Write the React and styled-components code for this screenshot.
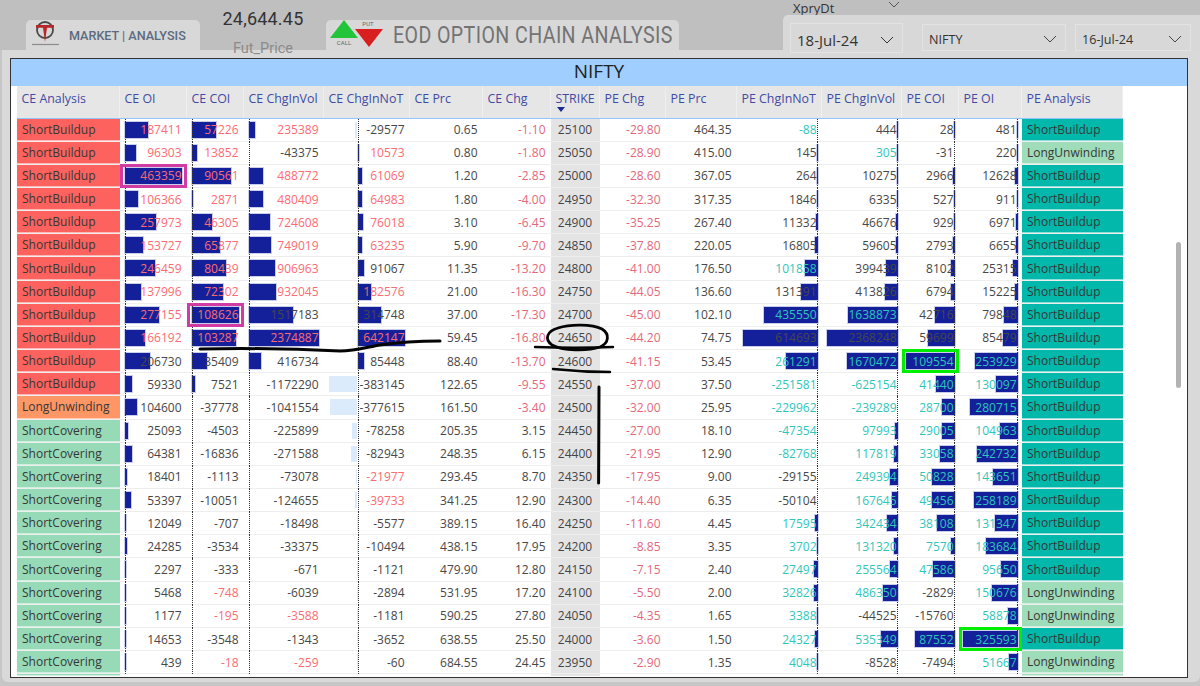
import React from 'react';
import styled, {createGlobalStyle} from 'styled-components';

// #region Data
const columns = [
  {key: 'ceOi', side: 'ce', offset: 5, span: 57},
  {key: 'ceCoi', side: 'ce', offset: 5, span: 47},
  {key: 'ceVol', side: 'ce', offset: 5, span: 70},
  {key: 'ceNot', side: 'ce', offset: 34, span: 47, negative: true},
  {key: 'cePrc'},
  {key: 'ceChg'},
  {key: 'strike'},
  {key: 'peChg'},
  {key: 'pePrc'},
  {key: 'peNot', side: 'pe', span: 75},
  {key: 'peVol', side: 'pe', span: 71},
  {key: 'peCoi', side: 'pe', span: 49},
  {key: 'peOi', side: 'pe', span: 55},
];

const headers = [
  'CE Analysis', 'CE OI', 'CE COI', 'CE ChgInVol', 'CE ChgInNoT', 'CE Prc', 'CE Chg', 'STRIKE',
  'PE Chg', 'PE Prc', 'PE ChgInNoT', 'PE ChgInVol', 'PE COI', 'PE OI', 'PE Analysis',
];

// value + colour letter: r red, k dark, t teal
const rows = [
  ['SB', '187411r', '57226r', '235389r', '-29577k', '0.65', '-1.10', '25100', '-29.80', '464.35', '-88t', '444k', '28k', '481k', 'SB'],
  ['SB', '96303r', '13852r', '-43375k', '10573r', '0.80', '-1.80', '25050', '-28.90', '415.00', '145k', '305t', '-31k', '220k', 'LU'],
  ['SB', '463359r', '90561r', '488772r', '61069r', '1.20', '-2.85', '25000', '-28.60', '367.05', '264k', '10275k', '2966k', '12628k', 'SB'],
  ['SB', '106366r', '2871r', '480409r', '64983r', '1.80', '-4.00', '24950', '-32.30', '317.35', '1846k', '6335k', '527k', '911k', 'SB'],
  ['SB', '257973r', '46305r', '724608r', '76018r', '3.10', '-6.45', '24900', '-35.25', '267.40', '11332k', '46676k', '929k', '6971k', 'SB'],
  ['SB', '153727r', '65877r', '749019r', '63235r', '5.90', '-9.70', '24850', '-37.80', '220.05', '16805k', '59605k', '2793k', '6655k', 'SB'],
  ['SB', '246459r', '80439r', '906963r', '91067k', '11.35', '-13.20', '24800', '-41.00', '176.50', '101858t', '399439k', '8102k', '25315k', 'SB'],
  ['SB', '137996r', '72302r', '932045r', '182576r', '21.00', '-16.30', '24750', '-44.05', '136.60', '131391k', '413826k', '6794k', '15225k', 'SB'],
  ['SB', '277155r', '108626r', '1517183k', '314748k', '37.00', '-17.30', '24700', '-45.00', '102.10', '435550t', '1638873t', '42716k', '79848k', 'SB'],
  ['SB', '166192r', '103287r', '2374887r', '642147r', '59.45', '-16.80', '24650', '-44.20', '74.75', '614693k', '2368248k', '59699k', '85479k', 'SB'],
  ['SB', '206730k', '35409k', '416734k', '85448k', '88.40', '-13.70', '24600', '-41.15', '53.45', '261291t', '1670472t', '109554t', '253929t', 'SB'],
  ['SB', '59330k', '7521k', '-1172290k', '-383145k', '122.65', '-9.55', '24550', '-37.00', '37.50', '-251581t', '-625154t', '41440t', '130097t', 'SB'],
  ['LU', '104600k', '-37778k', '-1041554k', '-377615k', '161.50', '-3.40', '24500', '-32.00', '25.95', '-229962t', '-239289t', '28700t', '280715t', 'SB'],
  ['SC', '25093k', '-4503k', '-225899k', '-78258k', '205.35', '3.15', '24450', '-27.00', '18.10', '-47354t', '97993t', '29005t', '104963t', 'SB'],
  ['SC', '64381k', '-16836k', '-271588k', '-82943k', '248.35', '6.15', '24400', '-21.95', '12.90', '-82768t', '117819t', '33058t', '242732t', 'SB'],
  ['SC', '18401k', '-1113k', '-73078k', '-21977r', '293.45', '8.70', '24350', '-17.95', '9.00', '-29155k', '249394t', '50828t', '143651t', 'SB'],
  ['SC', '53397k', '-10051k', '-124655k', '-39733r', '341.25', '12.90', '24300', '-14.40', '6.35', '-50104k', '167645t', '49456t', '258189t', 'SB'],
  ['SC', '12049k', '-707k', '-18498k', '-5577k', '389.15', '16.40', '24250', '-11.60', '4.45', '17595t', '342434t', '38108t', '131347t', 'SB'],
  ['SC', '24285k', '-3534k', '-33375k', '-10494k', '438.15', '17.95', '24200', '-8.85', '3.35', '3702t', '131320t', '7570t', '183684t', 'SB'],
  ['SC', '2297k', '-333k', '-671k', '-1121k', '479.90', '12.80', '24150', '-7.15', '2.40', '27497t', '255564t', '47586t', '95650t', 'SB'],
  ['SC', '5468k', '-748r', '-6039k', '-2894k', '531.95', '17.20', '24100', '-5.50', '2.00', '32826t', '486350t', '-2829k', '150676t', 'LU'],
  ['SC', '1177k', '-195r', '-3588r', '-1181k', '590.25', '27.80', '24050', '-4.35', '1.65', '3388t', '-44525k', '-15760k', '58878t', 'LU'],
  ['SC', '14653k', '-3548k', '-1343k', '-3652k', '638.55', '25.50', '24000', '-3.60', '1.50', '24327t', '535349t', '87552t', '325593t', 'SB'],
  ['SC', '439k', '-18r', '-259r', '-60k', '684.55', '24.45', '23950', '-2.90', '1.35', '4048t', '-8528k', '-7494k', '51667t', 'LU'],
];

const marks = {
  '2-ceOi': 'pink',
  '8-ceCoi': 'pink',
  '10-peCoi': 'green',
  '22-peOi': 'green',
};

const labels = {SB: 'ShortBuildup', LU: 'LongUnwinding', SC: 'ShortCovering'};
const ceFill = {SB: '#fd625e', LU: '#fe9666', SC: '#96dab8'};
const peFill = {SB: '#01b8aa', LU: '#9edcba'};
const inks = {r: '#fd6b72', k: '#474747', t: '#2fc6ba'};
const gridCols = '103px 67px 57px 80px 86px 73px 68px 49px 66px 71px 85px 80px 57px 63px 101px';

const parse = raw => {
  const last = raw[raw.length - 1];
  if (inks[last]) return {text: raw.slice(0, -1), ink: inks[last]};
  return {text: raw, ink: null};
};

const maxOf = index => Math.max(...rows.map(r => Math.abs(parseFloat(r[index + 1]))));
// #endregion

// #region Styled Components
const Global = createGlobalStyle`
  html, body {
    margin: 0;
    padding: 0;
    background: #c4c4c4;
  }
`;
const Page = styled.div`
  position: relative;
  width: 1200px;
  height: 686px;
  overflow: hidden;
  display: flex;
  flex-direction: column;
  background: #c6c6c6;
  font-family: 'Open Sans', 'Liberation Sans', sans-serif;
  font-size: 12px;
  color: #444;
`;
const TopBar = styled.div`
  height: 50px;
  flex: none;
  display: flex;
  align-items: flex-end;
  padding-left: 26px;
  background: #bfbfbf;
`;
const Tab = styled.div`
  height: 30px;
  width: ${p => p.$width}px;
  flex: none;
  display: flex;
  align-items: center;
  background: #d8d8d8;
  border-radius: 5px 5px 0 0;
`;
const Logo = styled.svg`
  width: 42px;
  height: 30px;
  flex: none;
`;
const BrandName = styled.span`
  font-family: Roboto, sans-serif;
  font-weight: 500;
  font-size: 12.6px;
  color: #5b6b80;
  margin-left: 1px;
`;
const PriceBlock = styled.div`
  width: 126px;
  height: 50px;
  flex: none;
  display: flex;
  flex-direction: column;
  align-items: center;
  padding: 8px 0 0;
  box-sizing: border-box;
  position: relative;
  z-index: 2;
  font-family: Roboto, sans-serif;
`;
const Price = styled.div`
  font-size: 18px;
  line-height: 22px;
  color: #333;
  letter-spacing: 0.2px;
`;
const PriceLabel = styled.div`
  margin-top: 9px;
  font-size: 14.5px;
  line-height: 20px;
  color: #8b8b8b;
`;
const ChainIcon = styled.svg`
  width: 62px;
  height: 30px;
  flex: none;
  overflow: visible;
`;
const ChainTitle = styled.span`
  margin-left: 5px;
  font-family: Roboto, sans-serif;
  font-size: 23.5px;
  color: #737373;
  letter-spacing: 0.5px;
  white-space: nowrap;
  transform: scaleX(0.833);
  transform-origin: left center;
`;
const FilterColumn = styled.div`
  margin-left: 104px;
  width: 417px;
  height: 50px;
  flex: none;
  display: flex;
  flex-direction: column;
`;
const SlicerTitle = styled.div`
  height: 15px;
  display: flex;
  align-items: flex-start;
  padding-left: 10px;
  font-size: 13px;
  color: #333;
  line-height: 17px;
`;
const SlicerToggle = styled.svg`
  width: 12px;
  height: 8px;
  margin: 1px 0 0 54px;
`;
const FilterPanel = styled.div`
  height: 35px;
  padding: 8px 0 0 7px;
  box-sizing: border-box;
  display: flex;
  align-items: flex-start;
  background: #d8d8d8;
  border-radius: 5px 0 0 0;
  position: relative;
  z-index: 2;
`;
const Dropdown = styled.div`
  width: ${p => p.$width}px;
  height: ${p => (p.$large ? 30 : 27)}px;
  margin: ${p => (p.$large ? 0 : 1)}px 0 0 ${p => p.$gap || 0}px;
  box-sizing: border-box;
  padding: 3px 8px 0 6px;
  display: flex;
  align-items: center;
  justify-content: space-between;
  border: 1px solid #e3e3e3;
  font-size: ${p => (p.$large ? 15 : 12.6)}px;
  color: #333;
`;
const Chevron = styled.svg`
  width: 14px;
  height: 8px;
  flex: none;
`;
const Panel = styled.div`
  flex: 1;
  margin: 0 0 4px 2px;
  padding: 8px 12px 0 8px;
  background: #d9d9d9;
  border-radius: 0 0 6px 6px;
  min-height: 0;
  display: flex;
`;
const Frame = styled.div`
  position: relative;
  width: 1178px;
  height: 620px;
  box-sizing: border-box;
  border: 1.5px solid #333;
  background: #fff;
  overflow: hidden;
  display: flex;
  flex-direction: column;
`;
const TitleBar = styled.div`
  height: 27px;
  flex: none;
  padding-bottom: 4px;
  box-sizing: border-box;
  display: flex;
  align-items: center;
  justify-content: center;
  background: #a0cfff;
  font-size: 19px;
  color: #222;
`;
const Table = styled.div`
  margin-left: 5.5px;
  width: 1106px;
`;
const HeaderRow = styled.div`
  display: grid;
  grid-template-columns: ${gridCols};
  height: 32.5px;
  background: #e6e6e6;
  border-bottom: 1px solid #8fc5fb;
  box-sizing: border-box;
`;
const HeaderCell = styled.div`
  position: relative;
  padding: 4px 0 0 5px;
  font-size: 12.4px;
  line-height: 17px;
  color: #3f4aa3;
  white-space: nowrap;
  box-shadow: inset -1px 0 0 #efefef;
  ${p =>
    p.$sorted &&
    `
    &::after {
      content: '';
      position: absolute;
      left: 6px;
      top: 21px;
      border-left: 4px solid transparent;
      border-right: 4px solid transparent;
      border-top: 5px solid #1a2a96;
    }
  `}
`;
const Row = styled.div`
  display: grid;
  grid-template-columns: ${gridCols};
  height: ${p => (p.$tail ? 2 : 23.17)}px;
  box-sizing: border-box;
  border-bottom: ${p => (p.$tail ? 0 : 1)}px solid #eeeeee;
`;
const Signal = styled.div`
  display: flex;
  align-items: center;
  padding-left: 5.5px;
  background: ${p => p.$fill};
  color: #373737;
  white-space: nowrap;
  border-bottom: 1px solid rgba(255, 255, 255, 0.55);
`;
const Cell = styled.div`
  position: relative;
  display: flex;
  align-items: center;
  justify-content: flex-end;
  padding-right: 5px;
  color: ${p => p.$ink};
  ${p =>
    p.$axisLeft !== undefined &&
    `
    &::before {
      content: '';
      position: absolute;
      top: 0;
      bottom: -1px;
      left: ${p.$axisLeft}px;
      border-left: 1px dotted #333;
      z-index: 2;
    }
  `}
  ${p =>
    p.$axisRight !== undefined &&
    `
    &::before {
      content: '';
      position: absolute;
      top: 0;
      bottom: -1px;
      right: ${p.$axisRight}px;
      border-left: 1px dotted #333;
      z-index: 2;
    }
  `}
  ${p =>
    p.$mark &&
    `
    &::after {
      content: '';
      position: absolute;
      inset: -1px 0 -1px 0;
      border: ${p.$mark === 'green' ? '3px solid #00ef00' : '3px solid #d03ca3'};
      z-index: 3;
    }
  `}
`;
const Bar = styled.div`
  position: absolute;
  top: 3px;
  height: 16px;
  background: ${p => (p.$pale ? '#dcebfb' : '#14209a')};
  box-shadow: ${p => (p.$pale ? 'none' : '0 0 0 1px rgba(20, 32, 154, 0.22)')};
  ${p => (p.$right !== undefined ? `right: ${p.$right}px;` : `left: ${p.$left}px;`)}
`;
const Value = styled.span`
  position: relative;
  z-index: 1;
`;
const PlainCell = styled.div`
  display: flex;
  align-items: center;
  justify-content: flex-end;
  padding-right: 5px;
  color: ${p => p.$ink};
`;
const StrikeCell = styled.div`
  display: flex;
  align-items: center;
  justify-content: center;
  background: #e4e4e4;
  color: #444;
`;
const ScrollThumb = styled.div`
  position: absolute;
  left: 1165px;
  top: 183px;
  width: 5px;
  height: 146px;
  border-radius: 3px;
  background: #b3b3b3;
`;
const Ink = styled.svg`
  position: absolute;
  inset: 0;
  width: 1200px;
  height: 686px;
  z-index: 5;
  pointer-events: none;
`;
// #endregion

const ChevronIcon = ({color = '#444'}) => (
  <Chevron viewBox="0 0 14 8">
    <polyline points="1,1 7,7 13,1" fill="none" stroke={color} strokeWidth="1" />
  </Chevron>
);

const DataCell = ({column, raw, index, rowIndex}) => {
  const {text, ink} = parse(raw);
  const value = parseFloat(text);
  const width = Math.max(1, (Math.abs(value) / maxOf(index)) * column.span);
  const mark = marks[`${rowIndex}-${column.key}`];
  if (column.side === 'ce') {
    const showBar = value > 0 || column.negative;
    const left = value < 0 ? column.offset - width : column.offset;
    return (
      <Cell $ink={ink} $axisLeft={column.offset} $mark={mark}>
        {showBar && <Bar $left={left} $pale={value < 0} style={{width}} />}
        <Value>{text}</Value>
      </Cell>
    );
  }
  return (
    <Cell $ink={ink} $axisRight={4} $mark={mark}>
      {value > 0 && <Bar $right={4} style={{width}} />}
      <Value>{text}</Value>
    </Cell>
  );
};

const redCols = {ceChg: '#e4687a', peChg: '#e4687a'};

const TableRow = ({row, rowIndex}) => (
  <Row>
    <Signal $fill={ceFill[row[0]]}>{labels[row[0]]}</Signal>
    {columns.map((column, i) => {
      const raw = row[i + 1];
      if (column.key === 'strike') return <StrikeCell key={column.key}>{raw}</StrikeCell>;
      if (column.side) {
        return <DataCell key={column.key} column={column} raw={raw} index={i} rowIndex={rowIndex} />;
      }
      const ink = raw[0] === '-' && redCols[column.key] ? redCols[column.key] : '#474747';
      return (
        <PlainCell key={column.key} $ink={ink}>
          {raw}
        </PlainCell>
      );
    })}
    <Signal $fill={peFill[row[14]]}>{labels[row[14]]}</Signal>
  </Row>
);

const App = () => (
  <Page>
    <Global />
    <TopBar>
      <Tab $width={174}>
        <Logo viewBox="0 0 42 30">
          <circle cx="19" cy="10" r="8" fill="none" stroke="#4a4a4a" strokeWidth="1.8" />
          <path d="M10 5h18v2.8h-7l-2 14.2-2-14.2h-7z" fill="#b8262a" />
          <line x1="6" y1="24.5" x2="33" y2="24.5" stroke="#8c8c8c" strokeWidth="1.2" />
        </Logo>
        <BrandName>MARKET | ANALYSIS</BrandName>
      </Tab>
      <PriceBlock>
        <Price>24,644.45</Price>
        <PriceLabel>Fut_Price</PriceLabel>
      </PriceBlock>
      <Tab $width={353}>
        <ChainIcon viewBox="0 0 62 30">
          <polygon points="4,18 32,18 18,0" fill="#22c43a" />
          <polygon points="29,9 57,9 43,27" fill="#d81e1e" />
          <text x="18" y="25" fontSize="6" textAnchor="middle" fill="#666" fontFamily="Roboto">
            CALL
          </text>
          <text x="42" y="6" fontSize="6" textAnchor="middle" fill="#666" fontFamily="Roboto">
            PUT
          </text>
        </ChainIcon>
        <ChainTitle>EOD OPTION CHAIN ANALYSIS</ChainTitle>
      </Tab>
      <FilterColumn>
        <SlicerTitle>
          XpryDt
          <SlicerToggle viewBox="0 0 12 8">
            <polyline points="1,1 6,6 11,1" fill="none" stroke="#555" strokeWidth="1" />
          </SlicerToggle>
        </SlicerTitle>
        <FilterPanel>
          <Dropdown $width={113} $large>
            18-Jul-24
            <ChevronIcon color="#333" />
          </Dropdown>
          <Dropdown $width={144} $gap={19}>
            NIFTY
            <ChevronIcon />
          </Dropdown>
          <Dropdown $width={116} $gap={9}>
            16-Jul-24
            <ChevronIcon />
          </Dropdown>
        </FilterPanel>
      </FilterColumn>
    </TopBar>
    <Panel>
      <Frame>
        <TitleBar>NIFTY</TitleBar>
        <Table>
          <HeaderRow>
            {headers.map(h => (
              <HeaderCell key={h} $sorted={h === 'STRIKE'}>
                {h}
              </HeaderCell>
            ))}
          </HeaderRow>
          {rows.map((row, i) => (
            <TableRow key={row[7]} row={row} rowIndex={i} />
          ))}
          <Row $tail>
            <Signal $fill={ceFill.SC} />
            {columns.map(c => (c.key === 'strike' ? <StrikeCell key={c.key} /> : <div key={c.key} />))}
            <Signal $fill={peFill.LU} />
          </Row>
        </Table>
        <ScrollThumb />
      </Frame>
    </Panel>
    <Ink viewBox="0 0 1200 686">
      <g fill="none" stroke="#050505" strokeLinecap="round" strokeLinejoin="round">
        <path d="M200 349 C250 348 300 349 340 351 C355 351 368 347 380 345 C400 342 420 341 440 341" strokeWidth="3" />
        <path d="M558 328 C570 324 592 324 602 329 C610 334 609 343 600 347 C588 351 562 351 552 345 C544 339 547 331 558 328" strokeWidth="2.8" />
        <path d="M535 347 C560 348 590 348 613 347" strokeWidth="2.4" />
        <path d="M553 369 C572 371 592 372 610 372" strokeWidth="2.4" />
        <path d="M599 387 L598.6 483" strokeWidth="3" />
      </g>
    </Ink>
  </Page>
);

export default App;
